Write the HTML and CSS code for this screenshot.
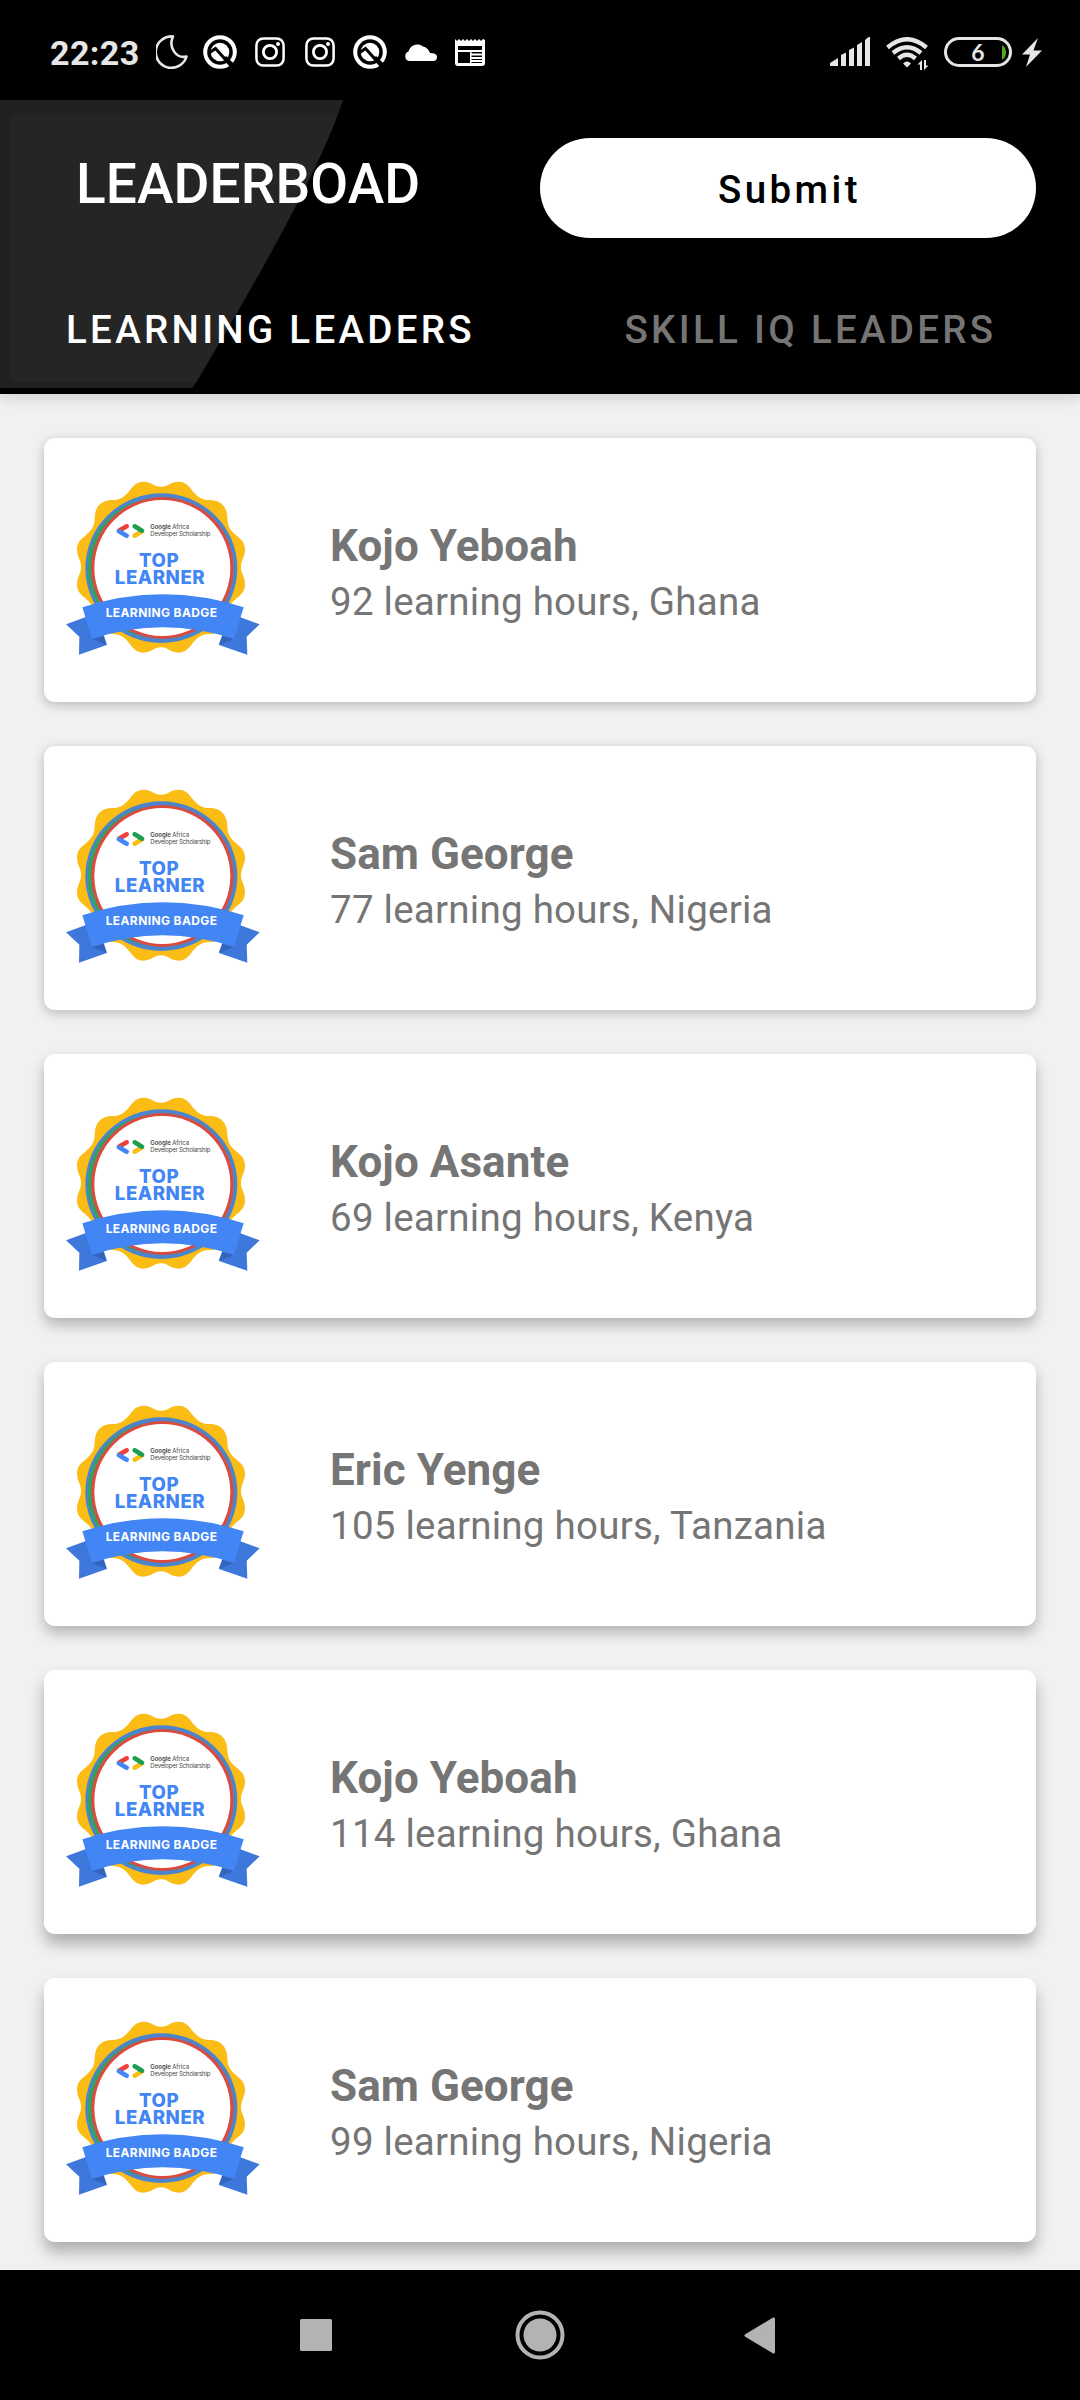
FILE: index.html
```html
<!DOCTYPE html>
<html lang="en">
<head>
<meta charset="utf-8">
<title>Leaderboard</title>
<link rel="stylesheet" href="styles.css">
</head>
<body>
<svg class="defs" aria-hidden="true">
  <symbol id="badge" viewBox="96 150 600 558">
    <path fill="#fbbc16" transform="translate(393 426)" d="M0-241C22-241 28-256 53-256C95-256 92-201 146-201C180-201 199-180 199-146C199-92 252-95 252-53C252-28 240-22 240 0C240 22 252 28 252 53C252 95 199 92 199 146C199 180 180 201 146 201C92 201 95 257 53 257C28 257 22 241 0 241C-22 241-28 257-53 257C-95 257-92 201-146 201C-180 201-199 180-199 146C-199 92-252 95-252 53C-252 28-240 22-240 0C-240-22-252-28-252-53C-252-95-199-92-199-146C-199-180-180-201-146-201C-92-201-95-256-53-256C-28-256-22-241 0-241Z"/>
    <ellipse cx="394" cy="429.500" rx="228" ry="224.500" fill="#4b84cf"/>
    <ellipse cx="387" cy="429" rx="214" ry="212" fill="#34a162"/>
    <ellipse cx="400" cy="429" rx="215" ry="215" fill="#5b80b8"/>
    <ellipse cx="397" cy="429" rx="213" ry="212" fill="#dd4a3c"/>
    <circle cx="397" cy="429" r="204" fill="#fff"/>
    <path fill="none" stroke="#ea4335" stroke-width="14" stroke-linecap="round" d="M267 317L290 304"/>
    <path fill="none" stroke="#4285f4" stroke-width="14" stroke-linecap="round" d="M267 319L290 332"/>
    <path fill="none" stroke="#fbbc16" stroke-width="14" stroke-linecap="round" d="M336 319L314 332"/>
    <path fill="none" stroke="#1e9e55" stroke-width="14" stroke-linecap="round" d="M314 304L336 317"/>
    <path fill="#3d78da" d="M108 598L170 575 230 660 147 689 148 635ZM689 598L627 575 567 660 652 689 650 635Z"/>
    <path fill="#3164bd" d="M186 642L221 630 231 660ZM612 642L577 630 566 660Z"/>
    <path fill="#4285f4" d="M157 547Q398 469 641 547L612 642Q398 572 186 642Z"/>
  </symbol>
  <symbol id="quora" viewBox="0 0 34 34">
    <circle cx="17" cy="17" r="14.800" fill="none" stroke="#fff" stroke-width="4"/>
    <circle cx="17" cy="17" r="9.300" fill="#fff"/>
    <path fill="none" stroke="#000" stroke-width="3" d="M6 18L12.500 13.500 30 33"/>
    <path stroke="#000" stroke-width="3" d="M22 22L31 31"/>
  </symbol>
  <symbol id="camera" viewBox="0 0 30 30">
    <rect x="1.400" y="1.400" width="27.200" height="27.200" rx="7" fill="none" stroke="#fff" stroke-width="2.500"/>
    <circle cx="15" cy="15" r="6.600" fill="none" stroke="#fff" stroke-width="2.800"/>
    <circle cx="23" cy="7" r="2" fill="#fff"/>
  </symbol>
</svg>

<div class="status">
  <span class="clock">22:23</span>
  <svg class="moon" viewBox="0 0 32 34"><path fill="none" stroke="#e6e6e6" stroke-width="2.600" stroke-linejoin="round" d="M17 1.500A15.700 15.700 0 1 0 30.500 21.500C20 24 12 12 17 1.500Z"/></svg>
  <svg class="quora"><use href="#quora"/></svg>
  <svg class="camera"><use href="#camera"/></svg>
  <svg class="camera"><use href="#camera"/></svg>
  <svg class="quora"><use href="#quora"/></svg>
  <svg class="cloud" viewBox="0 0 33 19"><path fill="#fff" d="M5 19A5 5 0 0 1 4.500 9.500A9 9 0 0 1 19 4.500Q24 5.500 26 11Q33 11 33 15T29 19Z"/></svg>
  <svg class="news" viewBox="0 0 30 28"><path fill="#fff" fill-rule="evenodd" d="M0 1L2 3 4 1 6 3 8 1 10 3 12 1 14 3 16 1 18 3 20 1 22 3 24 1 26 3 28 1 30 2V25Q30 28 27 28H3Q0 28 0 25ZM3 8V12H27V8ZM3 14V25H15V14ZM16.500 14V15.500H27V14ZM16.500 17.500V19H27V17.500ZM16.500 21V22H27V21ZM16.500 24V25H27V24Z"/></svg>
  <svg class="signal" viewBox="0 0 40 30"><path fill="#e6e6e6" d="M0 29V26L8 21V29ZM11 29V18L16 15.500V29ZM19 29V13L24 10.500V29ZM27 29V8L32 5V29ZM35 29V3L38.500 0H40V29Z"/></svg>
  <svg class="wifi" viewBox="0 0 43 34"><g fill="none" stroke="#e6e6e6" stroke-width="4.400"><path d="M1.500 10.500Q21-6 40.500 10.500"/><path d="M7 16Q21 4.500 35 16"/><path d="M12.500 21.500Q21 14 29.500 21.500"/></g><path fill="#e6e6e6" d="M17 26.500Q21 22.500 25 26.500L21 30.500ZM31.500 27.500L36 23V33H34V27.500ZM38 23H40V28.500H42.500L38 33Z"/></svg>
  <span class="battery"><svg class="level" viewBox="0 0 4 15"><path fill="#58a81c" d="M0 0Q4 3 4 7.500T0 15Z"/></svg>6</span>
  <svg class="bolt" viewBox="0 0 20 29"><path fill="#e6e6e6" d="M16 0L11.500 12.500H20L4 29 8 16.500H0Z"/></svg>
</div>

<header class="header">
  <svg class="backdrop" viewBox="0 0 343 288">
    <path fill="#212121" d="M0 0H343Q316 84 192.500 288H0Z"/>
    <path fill="#252525" d="M11 15H337.500Q307 93 196.500 282H11Z"/>
  </svg>
  <div class="bar">
    <h1 class="title">LEADERBOAD</h1>
    <button class="submit">Submit</button>
  </div>
  <nav class="tabs">
    <a class="tab active">LEARNING LEADERS</a>
    <a class="tab">SKILL IQ LEADERS</a>
  </nav>
</header>

<main class="list">
  <article class="card">
    <svg class="badge" viewBox="96 150 600 558"><use href="#badge" x="96" y="150" width="600" height="558"/><text class="org" x="361" y="312" textLength="116"><tspan class="strong">Google</tspan> Africa</text><text class="org" x="361" y="334" textLength="180">Developer Scholarship</text><text class="top"><tspan x="394" y="427">TOP</tspan> <tspan x="390" y="477">LEARNER</tspan></text><text class="ribbon" x="394" y="577" textLength="334">LEARNING BADGE</text></svg>
    <div class="info"><h2 class="name">Kojo Yeboah</h2><p class="detail">92 learning hours, Ghana</p></div>
  </article>
  <article class="card">
    <svg class="badge" viewBox="96 150 600 558"><use href="#badge" x="96" y="150" width="600" height="558"/><text class="org" x="361" y="312" textLength="116"><tspan class="strong">Google</tspan> Africa</text><text class="org" x="361" y="334" textLength="180">Developer Scholarship</text><text class="top"><tspan x="394" y="427">TOP</tspan> <tspan x="390" y="477">LEARNER</tspan></text><text class="ribbon" x="394" y="577" textLength="334">LEARNING BADGE</text></svg>
    <div class="info"><h2 class="name">Sam George</h2><p class="detail">77 learning hours, Nigeria</p></div>
  </article>
  <article class="card">
    <svg class="badge" viewBox="96 150 600 558"><use href="#badge" x="96" y="150" width="600" height="558"/><text class="org" x="361" y="312" textLength="116"><tspan class="strong">Google</tspan> Africa</text><text class="org" x="361" y="334" textLength="180">Developer Scholarship</text><text class="top"><tspan x="394" y="427">TOP</tspan> <tspan x="390" y="477">LEARNER</tspan></text><text class="ribbon" x="394" y="577" textLength="334">LEARNING BADGE</text></svg>
    <div class="info"><h2 class="name">Kojo Asante</h2><p class="detail">69 learning hours, Kenya</p></div>
  </article>
  <article class="card">
    <svg class="badge" viewBox="96 150 600 558"><use href="#badge" x="96" y="150" width="600" height="558"/><text class="org" x="361" y="312" textLength="116"><tspan class="strong">Google</tspan> Africa</text><text class="org" x="361" y="334" textLength="180">Developer Scholarship</text><text class="top"><tspan x="394" y="427">TOP</tspan> <tspan x="390" y="477">LEARNER</tspan></text><text class="ribbon" x="394" y="577" textLength="334">LEARNING BADGE</text></svg>
    <div class="info"><h2 class="name">Eric Yenge</h2><p class="detail">105 learning hours, Tanzania</p></div>
  </article>
  <article class="card">
    <svg class="badge" viewBox="96 150 600 558"><use href="#badge" x="96" y="150" width="600" height="558"/><text class="org" x="361" y="312" textLength="116"><tspan class="strong">Google</tspan> Africa</text><text class="org" x="361" y="334" textLength="180">Developer Scholarship</text><text class="top"><tspan x="394" y="427">TOP</tspan> <tspan x="390" y="477">LEARNER</tspan></text><text class="ribbon" x="394" y="577" textLength="334">LEARNING BADGE</text></svg>
    <div class="info"><h2 class="name">Kojo Yeboah</h2><p class="detail">114 learning hours, Ghana</p></div>
  </article>
  <article class="card">
    <svg class="badge" viewBox="96 150 600 558"><use href="#badge" x="96" y="150" width="600" height="558"/><text class="org" x="361" y="312" textLength="116"><tspan class="strong">Google</tspan> Africa</text><text class="org" x="361" y="334" textLength="180">Developer Scholarship</text><text class="top"><tspan x="394" y="427">TOP</tspan> <tspan x="390" y="477">LEARNER</tspan></text><text class="ribbon" x="394" y="577" textLength="334">LEARNING BADGE</text></svg>
    <div class="info"><h2 class="name">Sam George</h2><p class="detail">99 learning hours, Nigeria</p></div>
  </article>
</main>

<footer class="sysnav">
  <svg class="recent" viewBox="0 0 32 32"><rect width="32" height="32" rx="1.500" fill="#b3b3b3"/></svg>
  <svg class="home" viewBox="0 0 50 50"><circle cx="25" cy="25" r="22.500" fill="none" stroke="#b3b3b3" stroke-width="4"/><circle cx="25" cy="25" r="16.500" fill="#b3b3b3"/></svg>
  <svg class="back" viewBox="0 0 32 37"><path fill="#b3b3b3" stroke="#b3b3b3" stroke-width="3" stroke-linejoin="round" d="M2 18.500L29.500 2V35Z"/></svg>
</footer>
</body>
</html>
```

FILE: styles.css
```css
* { box-sizing: border-box; margin: 0; }

body {
  width: 1080px;
  height: 2400px;
  display: flex;
  flex-direction: column;
  overflow: hidden;
  background: #f1f1f1;
  font-family: Roboto, "Liberation Sans", sans-serif;
}

svg { display: block; flex: none; }

.defs { position: absolute; width: 0; height: 0; }

/* Status bar */
.status {
  flex: none;
  display: flex;
  align-items: flex-start;
  height: 100px;
  padding-left: 50px;
  background: #000;
  color: #e6e6e6;
}
.clock {
  width: 106px;
  margin-top: 33px;
  font-size: 34px;
  font-weight: 700;
  line-height: 40px;
  letter-spacing: 0.4px;
}
.moon { width: 32px; height: 34px; margin: 35px 15px 0 0; }
.quora { width: 34px; height: 34px; margin: 35px 18px 0 0; }
.camera { width: 30px; height: 30px; margin: 37px 20px 0 0; }
.camera + .quora { margin-left: -2px; margin-right: 17px; }
.cloud { width: 33px; height: 19px; margin: 42px 18px 0 0; }
.news { width: 30px; height: 28px; margin-top: 38px; }
.signal { width: 40px; height: 30px; margin: 37px 16px 0 auto; }
.wifi { width: 43px; height: 34px; margin: 37px 15px 0 0; }
.battery {
  position: relative;
  width: 68px;
  height: 30px;
  margin: 37px 10px 0 0;
  border: 3px solid #e6e6e6;
  border-radius: 15px;
  font: 700 23px/25px Lato, sans-serif;
  text-align: center;
}
.level { position: absolute; right: 3px; top: 5px; width: 4px; height: 15px; }
.bolt { width: 20px; height: 29px; margin: 38px 38px 0 0; }

/* App header */
.header {
  position: relative;
  z-index: 1;
  flex: none;
  height: 294px;
  padding-top: 38px;
  background: #000;
  color: #fff;
  box-shadow: 0 4px 14px rgba(0, 0, 0, 0.14);
}
.backdrop { position: absolute; left: 0; top: 0; width: 343px; height: 288px; }
.bar {
  position: relative;
  display: flex;
  justify-content: space-between;
  padding: 0 44px 0 76px;
}
.title {
  padding-top: 13px;
  font-size: 55px;
  font-weight: 500;
  line-height: 66px;
  letter-spacing: 0.1px;
}
.submit {
  width: 496px;
  height: 100px;
  border: 0;
  border-radius: 50px;
  padding: 2px 0 0 3px;
  background: #fff;
  color: #000;
  font: 500 38.5px/45px Roboto, sans-serif;
  letter-spacing: 3.44px;
}
.tabs { position: relative; display: flex; padding-top: 69px; }
.tab {
  flex: 1;
  padding-left: 1px;
  text-align: center;
  font-size: 38.5px;
  font-weight: 500;
  line-height: 46px;
  letter-spacing: 3.3px;
  color: #757575;
}
.tab.active { color: #fff; }

/* Leader cards */
.list {
  flex: 1;
  min-height: 0;
  display: flex;
  flex-direction: column;
  gap: 44px;
  padding: 44px;
}
.card {
  flex: none;
  height: 264px;
  display: flex;
  align-items: flex-start;
  padding: 37px 18px;
  border-radius: 11px;
  background: #fff;
  box-shadow: 0 3px 12px rgba(0, 0, 0, 0.24);
}
.card:nth-child(n+3) { box-shadow: 0 7px 14px rgba(0, 0, 0, 0.26); }
.card:nth-child(n+5) { box-shadow: 0 10px 15px rgba(0, 0, 0, 0.28); }
.badge { width: 200px; height: 186px; margin-right: 68px; }
.badge text { font-family: Inter, sans-serif; }
.badge .org { font-size: 18px; fill: #444; }
.badge .strong { font-weight: 600; }
.badge .top { font-size: 56px; font-weight: 800; letter-spacing: 1.6px; fill: #4285f4; text-anchor: middle; }
.badge .ribbon { font-size: 36px; font-weight: 700; fill: #fff; text-anchor: middle; }
.info { padding-top: 45px; color: #757575; }
.name { font-size: 44px; font-weight: 700; line-height: 52px; letter-spacing: 0.07px; }
.detail { font-size: 38.5px; line-height: 60px; letter-spacing: 0.25px; }

/* System navigation */
.sysnav {
  position: relative;
  z-index: 1;
  flex: none;
  display: flex;
  height: 130px;
  padding-left: 300px;
  background: #000;
}
.recent { width: 32px; height: 32px; margin-top: 49px; }
.home { width: 50px; height: 50px; margin: 40px 0 0 183px; }
.back { width: 32px; height: 37px; margin: 47px 0 0 179px; }
```
